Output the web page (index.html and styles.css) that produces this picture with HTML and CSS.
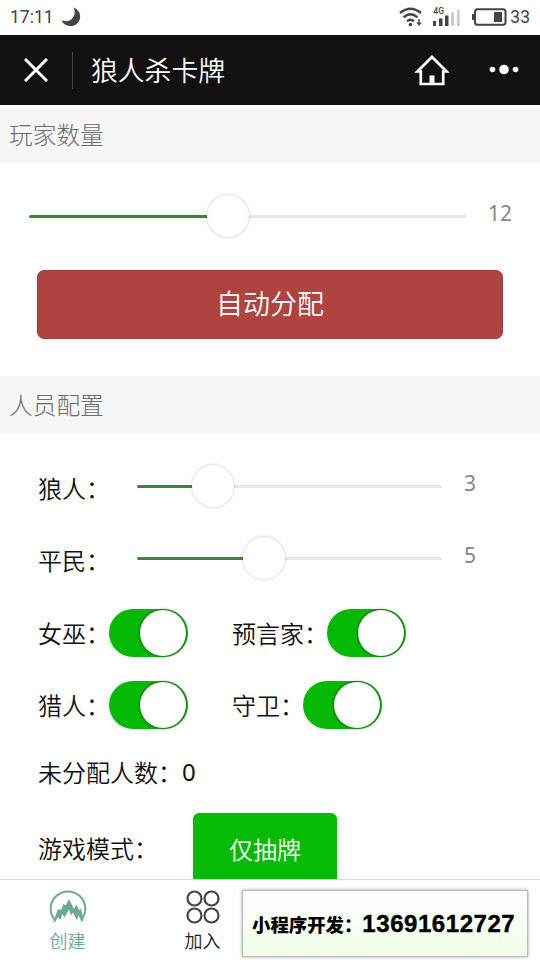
FILE: index.html
```html
<!DOCTYPE html>
<html lang="zh-CN">
<head>
<meta charset="utf-8">
<title>狼人杀卡牌</title>
<link rel="stylesheet" href="styles.css">
</head>
<body>
<div class="app">
  <header class="status">
    <span class="clock">17:11</span>
    <svg class="moon" width="20" height="20" viewBox="0 0 20 20"><path d="M12.500 .5C17.500 2.500 20 7 19 11.500C17.500 17.500 12.500 20 7 18.800C4 18 1.500 16 .5 13.300C4.500 15 9 14.200 11.500 11.200C14 8.200 14.500 4.200 12.500 .5Z" fill="#444"/></svg>
    <div class="indicators">
      <svg width="24" height="20" viewBox="0 0 24 20" fill="none" stroke="#444" stroke-width="2.300"><path d="M1 6Q11.500-2.500 22 6M4.500 10.300Q11.500 4.300 18.500 10.300M8 14.300Q11.500 11.300 15 14.300"/><circle cx="11.500" cy="17.500" r="1.800" fill="#444" stroke="none"/><path d="M20 12V17" stroke-width="1.500"/><path d="M17.300 15.500H22.700L20 19Z" fill="#444" stroke="none"/></svg>
      <div class="signal">
        <span class="gen">4G</span>
        <svg width="28" height="18" viewBox="0 0 28 18"><path d="M1 13h3v5h-3zM7 10.500h3.500v7.500h-3.500zM13 7.500h3.500v10.500h-3.500z" fill="#444"/><path d="M19 4.500h3v13.500h-3zM25 1.500h2.700v16.500h-2.700z" fill="#ccc"/></svg>
      </div>
      <svg class="battery" width="35" height="18" viewBox="0 0 35 18"><rect x="3" y="1.200" width="30.500" height="15.600" rx="2.500" fill="none" stroke="#444" stroke-width="2"/><path d="M0 6h3v6h-3zM22 4h8v10h-8z" fill="#444"/></svg>
      <span class="percent">33</span>
    </div>
  </header>
  <nav class="navbar">
    <svg class="close" width="24" height="24" viewBox="0 0 24 24" stroke="#fff" stroke-width="3"><path d="M1 1L23 23M23 1L1 23"/></svg>
    <h1 class="title">狼人杀卡牌</h1>
    <svg class="home" width="36" height="32" viewBox="0 0 36 32" fill="none" stroke="#fff" stroke-width="2.700"><path d="M6.800 17.500H3.500L18 3L32.500 17.500H29.200V30H6.800Z"/><path d="M15.500 21.500h5v8h-5z" fill="#fff" stroke="none"/></svg>
    <svg class="more" width="30" height="12" viewBox="0 0 30 12" fill="#fff"><circle cx="3.500" cy="5.500" r="2.800"/><circle cx="15" cy="5.500" r="4.800"/><circle cx="26.500" cy="5.500" r="2.800"/></svg>
  </nav>
  <main class="content">
    <h2 class="section-title first">玩家数量</h2>
    <section class="players">
      <div class="slider-row wide">
        <div class="slider"><i class="fill" style="width:199px"></i><i class="thumb"></i><i class="rest"></i></div>
        <span class="value">12</span>
      </div>
      <button class="auto">自动分配</button>
    </section>
    <h2 class="section-title">人员配置</h2>
    <section class="roles">
      <div class="row slider-row">
        <span class="label">狼人：</span>
        <div class="slider"><i class="fill" style="width:76px"></i><i class="thumb"></i><i class="rest"></i></div>
        <span class="value">3</span>
      </div>
      <div class="row slider-row">
        <span class="label">平民：</span>
        <div class="slider"><i class="fill" style="width:127px"></i><i class="thumb"></i><i class="rest"></i></div>
        <span class="value">5</span>
      </div>
      <div class="switches">
        <div class="row toggles">
          <div class="toggle"><span>女巫：</span><i class="switch"></i></div>
          <div class="toggle"><span>预言家：</span><i class="switch"></i></div>
        </div>
        <div class="row toggles">
          <div class="toggle"><span>猎人：</span><i class="switch"></i></div>
          <div class="toggle"><span>守卫：</span><i class="switch"></i></div>
        </div>
      </div>
      <div class="row remaining">未分配人数：<span class="zero">0</span></div>
      <div class="mode"><span>游戏模式：</span><button class="draw">仅抽牌</button></div>
    </section>
  </main>
  <footer class="tabbar">
    <div class="tab active">
      <svg width="38" height="34" viewBox="0 0 38 34"><path d="M5.500 29.500A17.300 17.300 0 1 1 32.500 29.500" fill="none" stroke="#6aaa91" stroke-width="2"/><path d="M4 32.500L9 19L12 20L14.500 14L16.500 15.500L20 9L25 19L27.500 14.500L30 20L32 18.500L34.500 30L32.500 32L29.500 25L28 30.500L24 22.500L22 25.500L20 19.500L15.500 27.500L13.500 24L11 30L9 27L6.500 31.500Z" fill="#6aaa91"/></svg>
      <span>创建</span>
    </div>
    <div class="tab">
      <svg width="34" height="34" viewBox="0 0 34 34" fill="none" stroke="#444" stroke-width="2.200"><circle cx="8.500" cy="8.500" r="7"/><circle cx="25.500" cy="8.500" r="7"/><circle cx="8.500" cy="25.500" r="7"/><circle cx="25.500" cy="25.500" r="7"/></svg>
      <span>加入</span>
    </div>
    <div class="tab"></div>
    <div class="tab"></div>
    <div class="contact"><span>小程序开发：</span><b>13691612727</b></div>
  </footer>
</div>
</body>
</html>
```
FILE: styles.css
```css
* { box-sizing: border-box; }
body {
  margin: 0;
  background: #fefefe;
  color: #111;
  font: 350 24px/36px "Noto Sans CJK SC", "Noto Sans", sans-serif;
}
h1, h2 { margin: 0; font-weight: 350; }
svg { display: block; flex: none; }
button { display: block; border: 0; padding: 0; font: inherit; color: #fff; }
.app { width: 540px; height: 960px; overflow: hidden; display: flex; flex-direction: column; }

.status {
  flex: none; height: 35px; padding: 0 10px;
  display: flex; align-items: center;
  font: 400 17.500px/34px Roboto, sans-serif; color: #444;
}
.clock { margin-top: -1px; }
.moon { margin-left: 7px; margin-top: -2px; }
.indicators { margin-left: auto; display: flex; align-items: center; height: 33px; margin-top: -1px; }
.signal { position: relative; margin-left: 9px; }
.gen { position: absolute; left: 1px; top: -2px; font: 500 8.500px/10px Roboto, sans-serif; }
.battery { margin-left: 12px; margin-right: 3px; }

.navbar {
  flex: none; height: 70px; padding: 0 21px 0 24px;
  display: flex; align-items: center; background: #111; color: #fff;
}
.close { margin-top: -1px; }
.title {
  margin-left: 24px; padding-left: 18px; border-left: 1px solid #444;
  font-size: 26.800px; line-height: 35px; height: 37px;
}
.home { margin-left: auto; }
.more { margin-left: 39px; }

.content { flex: 1; min-height: 0; overflow: hidden; }
.section-title {
  height: 57px; padding: 0 9px; background: #f7f7f7; color: #6c6c6c;
  font-size: 23.700px; font-weight: 300; line-height: 56px;
}
.section-title.first { height: 54px; margin-top: 4px; line-height: 51px; }
.players { height: 213px; padding: 31px 37px 0; }
.slider-row { display: flex; align-items: center; }
.wide { height: 44px; margin: 0 -8px; }
.slider { flex: none; width: 305px; display: flex; align-items: center; }
.wide .slider { width: 437px; }
.fill { height: 3px; background: #338a36; border-radius: 2px; }
.rest { flex: 1; height: 3px; background: #e6e6e6; border-radius: 2px; }
.thumb {
  flex: none; width: 42px; height: 42px; margin: 0 -21px; border-radius: 50%;
  background: #fff; box-shadow: 0 0 3px rgba(0,0,0,.24); z-index: 1;
}
.value {
  margin-left: 22px; padding-bottom: 6px;
  font: 400 21px/36px "Noto Sans", sans-serif; color: #888;
}
.auto {
  width: 466px; height: 69px; margin-top: 32px; padding-bottom: 3px;
  border: 1px solid #99413e; border-radius: 7px; background: #af433f; font-size: 27px;
}

.roles { padding: 17px 38px 0; }
.row { height: 72px; display: flex; align-items: center; }
.label { width: 99px; padding-top: 4px; }
.switches { padding-top: 3px; }
.toggles { display: grid; grid-template-columns: 194px 1fr; }
.toggle { display: flex; align-items: center; }
.toggle span { margin-right: -1px; }
.switch {
  width: 79px; height: 48px; padding: 1px 2px 1px 1px; border-radius: 24px;
  background: #04b904; display: flex; justify-content: flex-end;
}
.switch::after {
  content: ""; width: 46px; height: 46px; border-radius: 50%;
  background: #fefefe; box-shadow: 0 0 2px 1px rgba(40,70,40,.6);
}
.remaining { height: 62px; }
.zero { font-family: "Noto Sans", sans-serif; font-weight: 400; }
.mode { display: flex; height: 72px; margin-top: 10px; align-items: center; }
.mode span { margin-top: -2px; }
.draw {
  width: 144px; height: 72px; margin-left: 35px; padding-bottom: 1px;
  border-radius: 6px; background: #06bb04;
}

.tabbar {
  flex: none; position: relative; height: 81px; border-top: 1px solid #ddd;
  display: grid; grid-template-columns: repeat(4, 135px); background: #fefefe;
}
.tab {
  display: flex; flex-direction: column; align-items: center;
  padding-top: 10px; font-size: 18px; line-height: 26px; color: #222;
}
.tab span { margin-top: 3px; }
.active { color: #6aaa91; }
.contact {
  position: absolute; left: 242px; top: 10px; width: 286px; height: 67px;
  display: flex; align-items: center; padding-left: 9px; white-space: nowrap;
  border: 1px solid #bbb; box-shadow: 0 0 3px rgba(0,0,0,.35);
  background: linear-gradient(#fff, #f0fee8);
  color: #000; font-weight: 900; font-size: 18.400px;
}
.contact b {
  font: 700 24px/30px "Liberation Sans", sans-serif; letter-spacing: .55px;
  -webkit-text-stroke: .4px #000;
}
```
